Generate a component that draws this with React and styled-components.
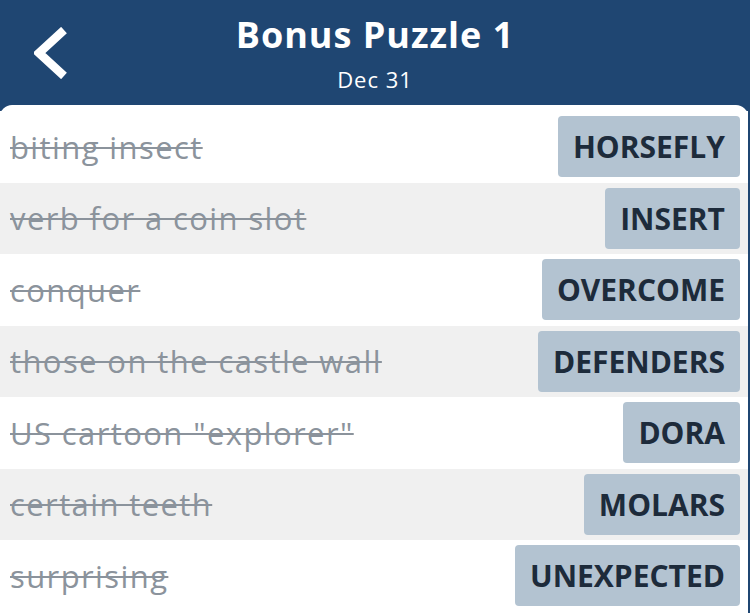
import React from "react";
import styled, { createGlobalStyle } from "styled-components";

const HEADER_COLOR = "#1f4672";
const ROW_ALT_COLOR = "#f0f0f0";
const TILE_COLOR = "#b3c3d1";

const GlobalStyle = createGlobalStyle`
  html, body {
    margin: 0;
    padding: 0;
    background: ${HEADER_COLOR};
    font-family: "Open Sans", "Lato", sans-serif;
  }
`;

const Page = styled.div`
  width: 750px;
  height: 613px;
  overflow: hidden;
  display: flex;
  flex-direction: column;
  background: ${HEADER_COLOR};
`;

const Header = styled.header`
  height: 105px;
  display: grid;
  grid-template-columns: 100px 1fr 100px;
  align-items: center;
  color: white;
`;

const BackButton = styled.button`
  background: none;
  border: none;
  padding: 0 0 0 34px;
  height: 60px;
  display: flex;
  align-items: center;
  cursor: pointer;
`;

const TitleBlock = styled.div`
  align-self: start;
  display: flex;
  flex-direction: column;
  align-items: center;
  padding-top: 13px;
`;

const Title = styled.h1`
  margin: 0;
  font-size: 36px;
  font-weight: 700;
  line-height: 44px;
  letter-spacing: 1px;
`;

const Subtitle = styled.div`
  margin-top: 8px;
  font-size: 22px;
  line-height: 28px;
  letter-spacing: 1px;
`;

const Card = styled.div`
  flex: 1;
  margin-right: 2px;
  background: white;
  border-radius: 12px 12px 0 0;
  padding-top: 6px;
  display: flex;
  flex-direction: column;
`;

const Row = styled.div`
  height: 71.5px;
  display: flex;
  align-items: center;
  justify-content: space-between;
  padding: 0 8px 0 10px;
  background: ${(p) => (p.$alt ? ROW_ALT_COLOR : "white")};
`;

const Clue = styled.span`
  font-size: 31px;
  letter-spacing: 1.4px;
  color: #8b939c;
  text-decoration: line-through;
  text-decoration-thickness: 2px;
  white-space: nowrap;
`;

const Answer = styled.span`
  height: 61px;
  display: flex;
  align-items: center;
  padding: 0 15px;
  background: ${TILE_COLOR};
  border-radius: 4px;
  color: #1d2b3b;
  font-size: 30px;
  font-weight: 700;
`;

const entries = [
  { clue: "biting insect", answer: "HORSEFLY" },
  { clue: "verb for a coin slot", answer: "INSERT" },
  { clue: "conquer", answer: "OVERCOME" },
  { clue: "those on the castle wall", answer: "DEFENDERS" },
  { clue: 'US cartoon "explorer"', answer: "DORA" },
  { clue: "certain teeth", answer: "MOLARS" },
  { clue: "surprising", answer: "UNEXPECTED" },
];

function Chevron() {
  return (
    <svg width="34" height="52" viewBox="0 0 34 52">
      <polyline
        points="30,3 5,26 30,49"
        fill="none"
        stroke="white"
        strokeWidth="8.5"
      />
    </svg>
  );
}

export default function App() {
  return (
    <Page>
      <GlobalStyle />
      <Header>
        <BackButton aria-label="Back">
          <Chevron />
        </BackButton>
        <TitleBlock>
          <Title>Bonus Puzzle 1</Title>
          <Subtitle>Dec 31</Subtitle>
        </TitleBlock>
        <div />
      </Header>
      <Card>
        {entries.map((item, i) => (
          <Row key={i} $alt={i % 2 === 1}>
            <Clue>{item.clue}</Clue>
            <Answer>{item.answer}</Answer>
          </Row>
        ))}
      </Card>
    </Page>
  );
}
